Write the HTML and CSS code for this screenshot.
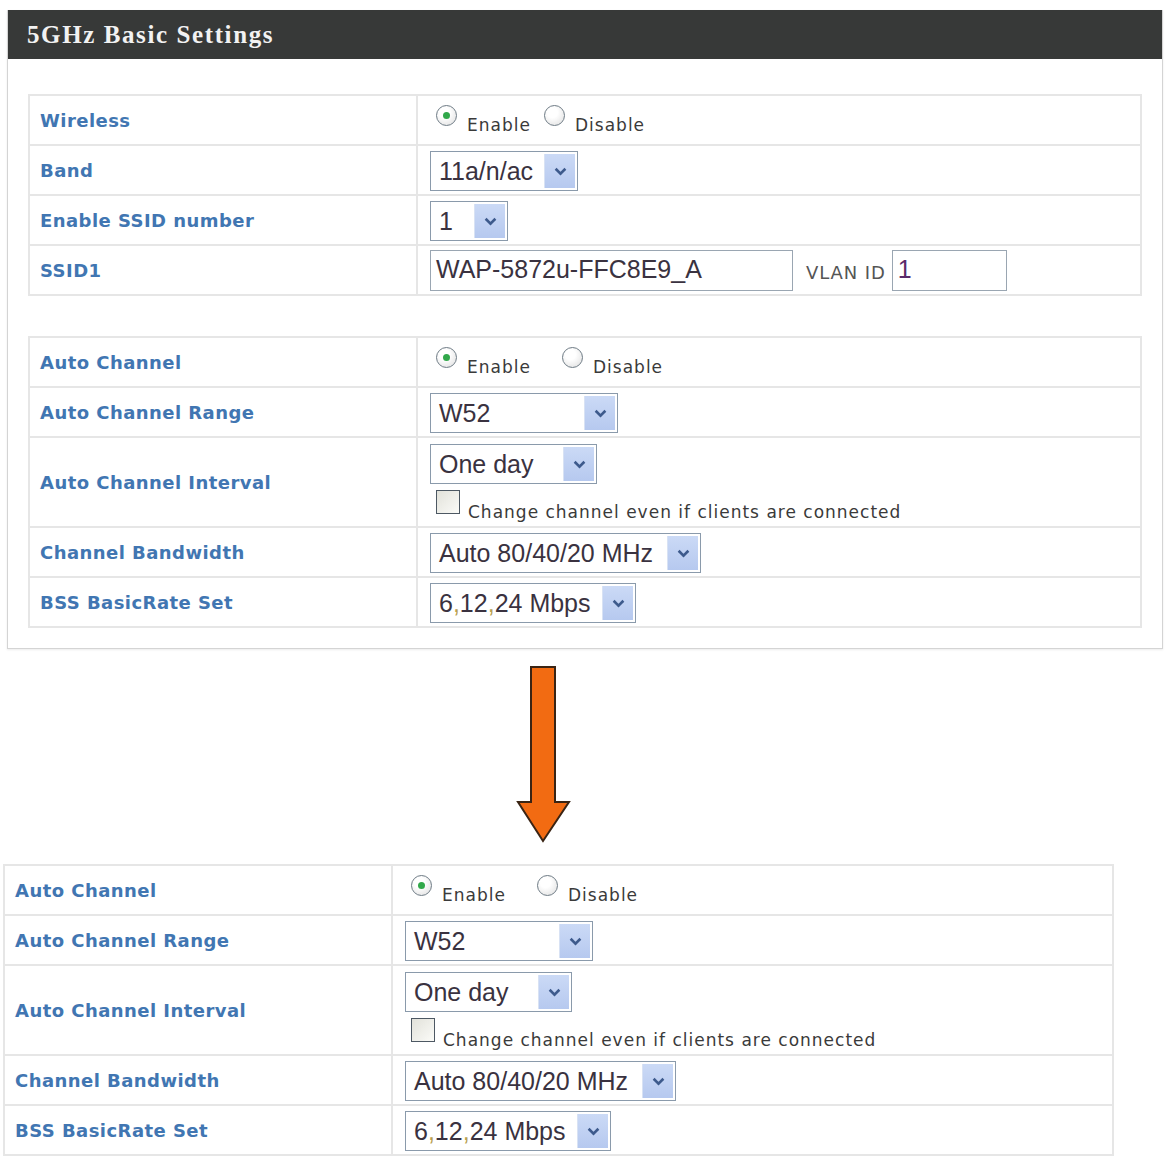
FILE: index.html
```html
<!DOCTYPE html>
<html lang="en">
<head>
    <meta charset="UTF-8">
    <title>5GHz Basic Settings</title>
    <link rel="stylesheet" href="styles.css">
</head>
<body>

<!-- settings panel as it looks before the change -->
<div class="panel">
    <div class="panel-head">5GHz Basic Settings</div>
    <div class="panel-body">

        <table class="settings">
            <tr>
                <td class="label">Wireless</td>
                <td class="value">
                    <span class="radio checked"></span><span class="opt">Enable</span>
                    <span class="radio"></span><span class="opt">Disable</span>
                </td>
            </tr>
            <tr>
                <td class="label">Band</td>
                <td class="value"><div class="select w-band"><span class="sel-text">11a/n/ac</span><span class="drop"><svg viewBox="0 0 12 8" width="13" height="9"><path d="M1.5 1.5 L6 6 L10.5 1.5" fill="none" stroke="#3d5a8c" stroke-width="2.4"/></svg></span></div></td>
            </tr>
            <tr>
                <td class="label">Enable SSID number</td>
                <td class="value"><div class="select w-ssid"><span class="sel-text">1</span><span class="drop"><svg viewBox="0 0 12 8" width="13" height="9"><path d="M1.5 1.5 L6 6 L10.5 1.5" fill="none" stroke="#3d5a8c" stroke-width="2.4"/></svg></span></div></td>
            </tr>
            <tr>
                <td class="label">SSID1</td>
                <td class="value">
                    <div class="inline-row">
                        <div class="textbox w-name">WAP-5872u-FFC8E9_A</div>
                        <span class="vlan">VLAN ID</span>
                        <div class="textbox w-vlan">1</div>
                    </div>
                </td>
            </tr>
        </table>

        <table class="settings second">
            <tr>
                <td class="label">Auto Channel</td>
                <td class="value">
                    <span class="radio checked"></span><span class="opt wide">Enable</span>
                    <span class="radio"></span><span class="opt">Disable</span>
                </td>
            </tr>
            <tr>
                <td class="label">Auto Channel Range</td>
                <td class="value"><div class="select w-range"><span class="sel-text">W52</span><span class="drop"><svg viewBox="0 0 12 8" width="13" height="9"><path d="M1.5 1.5 L6 6 L10.5 1.5" fill="none" stroke="#3d5a8c" stroke-width="2.4"/></svg></span></div></td>
            </tr>
            <tr class="tall">
                <td class="label">Auto Channel Interval</td>
                <td class="value">
                    <div class="select w-interval"><span class="sel-text">One day</span><span class="drop"><svg viewBox="0 0 12 8" width="13" height="9"><path d="M1.5 1.5 L6 6 L10.5 1.5" fill="none" stroke="#3d5a8c" stroke-width="2.4"/></svg></span></div>
                    <div class="check-line"><span class="checkbox"></span><span class="opt">Change channel even if clients are connected</span></div>
                </td>
            </tr>
            <tr>
                <td class="label">Channel Bandwidth</td>
                <td class="value"><div class="select w-bw"><span class="sel-text">Auto 80/40/20 MHz</span><span class="drop"><svg viewBox="0 0 12 8" width="13" height="9"><path d="M1.5 1.5 L6 6 L10.5 1.5" fill="none" stroke="#3d5a8c" stroke-width="2.4"/></svg></span></div></td>
            </tr>
            <tr>
                <td class="label">BSS BasicRate Set</td>
                <td class="value"><div class="select w-rate"><span class="sel-text">6<span class="comma">,</span>12<span class="comma">,</span>24 Mbps</span><span class="drop"><svg viewBox="0 0 12 8" width="13" height="9"><path d="M1.5 1.5 L6 6 L10.5 1.5" fill="none" stroke="#3d5a8c" stroke-width="2.4"/></svg></span></div></td>
            </tr>
        </table>

    </div>
</div>

<!-- arrow between the two states -->
<div class="arrow-box">
    <svg class="arrow" viewBox="0 0 56 178" width="56" height="178">
        <path d="M15 2 H39 V137 H53 L27 176 L2 137 H15 Z" fill="#f26b12" stroke="#3a2414" stroke-width="2" stroke-linejoin="miter"/>
    </svg>
</div>

<!-- the auto channel block after the change -->
<table class="settings after">
    <tr>
        <td class="label">Auto Channel</td>
        <td class="value">
            <span class="radio checked"></span><span class="opt wide">Enable</span>
            <span class="radio"></span><span class="opt">Disable</span>
        </td>
    </tr>
    <tr>
        <td class="label">Auto Channel Range</td>
        <td class="value"><div class="select w-range"><span class="sel-text">W52</span><span class="drop"><svg viewBox="0 0 12 8" width="13" height="9"><path d="M1.5 1.5 L6 6 L10.5 1.5" fill="none" stroke="#3d5a8c" stroke-width="2.4"/></svg></span></div></td>
    </tr>
    <tr class="tall">
        <td class="label">Auto Channel Interval</td>
        <td class="value">
            <div class="select w-interval"><span class="sel-text">One day</span><span class="drop"><svg viewBox="0 0 12 8" width="13" height="9"><path d="M1.5 1.5 L6 6 L10.5 1.5" fill="none" stroke="#3d5a8c" stroke-width="2.4"/></svg></span></div>
            <div class="check-line"><span class="checkbox"></span><span class="opt">Change channel even if clients are connected</span></div>
        </td>
    </tr>
    <tr>
        <td class="label">Channel Bandwidth</td>
        <td class="value"><div class="select w-bw"><span class="sel-text">Auto 80/40/20 MHz</span><span class="drop"><svg viewBox="0 0 12 8" width="13" height="9"><path d="M1.5 1.5 L6 6 L10.5 1.5" fill="none" stroke="#3d5a8c" stroke-width="2.4"/></svg></span></div></td>
    </tr>
    <tr>
        <td class="label">BSS BasicRate Set</td>
        <td class="value"><div class="select w-rate"><span class="sel-text">6<span class="comma">,</span>12<span class="comma">,</span>24 Mbps</span><span class="drop"><svg viewBox="0 0 12 8" width="13" height="9"><path d="M1.5 1.5 L6 6 L10.5 1.5" fill="none" stroke="#3d5a8c" stroke-width="2.4"/></svg></span></div></td>
    </tr>
</table>

</body>
</html>
```
FILE: styles.css
```css
body {
    margin: 0;
    padding: 10px 0 0 0;
    background: #ffffff;
    font-family: "DejaVu Sans", Verdana, sans-serif;
}

.panel {
    margin-left: 7px;
    width: 1154px;
    border: 1px solid #d4d4d4;
    border-top: none;
    box-shadow: 0 1px 2px rgba(0,0,0,0.08);
}

.panel-head {
    height: 49px;
    line-height: 50px;
    background-color: #373938;
    color: #f2f2f2;
    font-family: "Liberation Serif", "Times New Roman", serif;
    font-weight: bold;
    font-size: 25px;
    letter-spacing: 1.6px;
    padding-left: 19px;
}

.panel-body {
    padding: 35px 20px 20px 20px;
}

/* settings tables */
.settings {
    width: 100%;
    border-collapse: collapse;
    border: 2px solid #e6e6e6;
}

.settings.second {
    margin-top: 40px;
}

.settings td {
    border: 2px solid #e6e6e6;
    height: 48px;
    padding: 0;
}

.settings tr.tall td {
    height: 88px;
}

.settings .label {
    width: 376px;
    padding-left: 10px;
    color: #4176b2;
    font-size: 18px;
    font-weight: bold;
    letter-spacing: 0.45px;
}

.settings .value {
    padding-left: 12px;
    color: #3a3a3a;
}

.settings.after {
    margin-left: 3px;
    width: 1111px;
}

/* radio buttons */
.radio {
    display: inline-block;
    width: 21px;
    height: 21px;
    box-sizing: border-box;
    border: 1.5px solid #6f7c86;
    border-radius: 50%;
    background: radial-gradient(circle at 40% 35%, #ffffff 30%, #dcdcdc 100%);
    vertical-align: -1px;
    margin-left: 6px;
    margin-right: 10px;
    position: relative;
}

.radio.checked::after {
    content: "";
    position: absolute;
    left: 5.5px;
    top: 5.5px;
    width: 7px;
    height: 7px;
    border-radius: 50%;
    background: #31a84a;
}

.opt {
    font-size: 17px;
    letter-spacing: 1px;
    color: #3a3a3a;
    vertical-align: -6px;
    margin-right: 2px;
}

.opt.wide {
    margin-right: 20px;
}

/* drop-down lists */
.select {
    display: inline-flex;
    align-items: stretch;
    height: 40px;
    border: 1.5px solid #8a9aab;
    background: #fff;
    box-sizing: border-box;
    padding: 2px;
    margin-top: 2px;
}

.sel-text {
    flex: 1;
    font-family: "Liberation Sans", Arial, sans-serif;
    font-size: 25px;
    color: #3a3240;
    line-height: 34px;
    padding-left: 6px;
    white-space: nowrap;
}

.comma {
    color: #b8a050;
}

.drop {
    width: 30px;
    display: flex;
    align-items: center;
    justify-content: center;
    background: linear-gradient(#cbdaf6, #b6c9ef);
    border-left: 1px solid #d8e2f4;
}

.w-band { width: 148px; }
.w-ssid { width: 78px; }
.w-range { width: 188px; }
.w-interval { width: 167px; }
.w-bw { width: 271px; }
.w-rate { width: 206px; }

/* text inputs */
.inline-row {
    display: flex;
    align-items: center;
}

.textbox {
    height: 41px;
    box-sizing: border-box;
    border: 1.5px solid #9aa6b2;
    font-family: "Liberation Sans", Arial, sans-serif;
    font-size: 25px;
    color: #3a3240;
    line-height: 37px;
    padding-left: 5px;
}

.w-name { width: 363px; }
.w-vlan { width: 115px; color: #5a2a6a; }

.vlan {
    font-size: 18px;
    color: #555;
    margin: 4px 6px 0 13px;
    letter-spacing: 0.9px;
}

/* checkbox line */
.check-line {
    margin-top: 6px;
    margin-left: 6px;
}

.checkbox {
    display: inline-block;
    width: 24px;
    height: 24px;
    box-sizing: border-box;
    border: 1.5px solid #4d5863;
    background: linear-gradient(135deg, #e2e2da, #fbfbf8);
    margin-right: 8px;
}

.check-line .opt {
    vertical-align: -4px;
}

/* arrow */
.arrow-box {
    height: 215px;
    padding-left: 516px;
    padding-top: 16px;
    box-sizing: border-box;
}
```
